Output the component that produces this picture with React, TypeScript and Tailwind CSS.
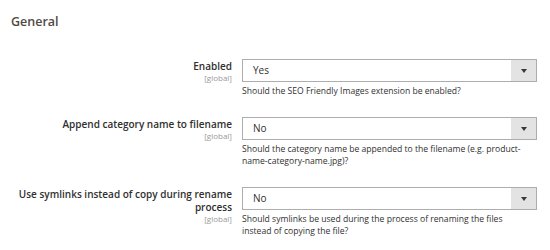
import React from "react";

type Row = { label: string; value: string; hint: string };

const rows: Row[] = [
  { label: "Enabled", value: "Yes", hint: "Should the SEO Friendly Images extension be enabled?" },
  {
    label: "Append category name to filename",
    value: "No",
    hint: "Should the category name be appended to the filename (e.g. product-name-category-name.jpg)?",
  },
  {
    label: "Use symlinks instead of copy during rename process",
    value: "No",
    hint: "Should symlinks be used during the process of renaming the files instead of copying the file?",
  },
];

function Select({ value }: { value: string }) {
  return (
    <div className="flex h-[23px] w-[295px] border border-[#adadad] bg-white">
      <div className="flex flex-1 items-center pl-[10px] text-[10px] text-[#303030]">{value}</div>
      <div className="flex w-[25px] items-center justify-center bg-[#e3e3e3]">
        <svg width="6" height="4" viewBox="0 0 6 4">
          <path d="M0 0 L6 0 L3 4 Z" fill="#41362f" />
        </svg>
      </div>
    </div>
  );
}

export default function App() {
  return (
    <div
      className="h-[250px] w-[550px] overflow-hidden bg-white pl-[11px] pt-[14px]"
      style={{ fontFamily: '"Open Sans", sans-serif' }}
    >
      <div className="text-[12.5px] font-semibold leading-[16px] text-[#514943]">General</div>
      <div className="mt-[29px] flex flex-col gap-[20px]">
        {rows.map((r) => (
          <div key={r.label} className="flex gap-[10px]">
            <div className="flex w-[221px] flex-col items-end pt-[1px] text-right">
              <div className="text-[10px] font-semibold leading-[13px] text-[#303030]">{r.label}</div>
              <div className="text-[8px] leading-[10px] text-[#999999]">[global]</div>
            </div>
            <div className="flex w-[295px] flex-col">
              <Select value={r.value} />
              <div className="mt-[3px] w-[285px] text-[8.6px] leading-[12px] text-[#303030]">{r.hint}</div>
            </div>
          </div>
        ))}
      </div>
    </div>
  );
}
